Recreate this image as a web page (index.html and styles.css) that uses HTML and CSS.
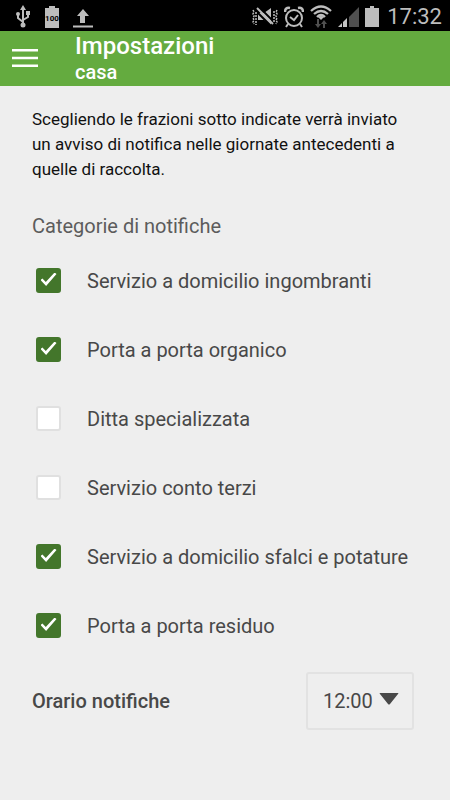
FILE: index.html
```html
<!DOCTYPE html>
<html lang="it">
<head>
<meta charset="utf-8">
<meta name="viewport" content="width=device-width, initial-scale=1">
<title>Impostazioni</title>
<link rel="stylesheet" href="styles.css">
</head>
<body>
<div class="status">
  <div class="status-left">
    <svg width="16" height="24" viewBox="0 0 16 24" fill="none" stroke="#bdbdbd" stroke-width="2"><path d="M7 19V4M7 17L2 13V9M7 15L12 12V8"/><path d="M4 5L7 0L10 5Z" fill="#bdbdbd" stroke="none"/><circle cx="7" cy="20" r="2.500" fill="#bdbdbd" stroke="none"/><circle cx="2" cy="9" r="2" fill="#bdbdbd" stroke="none"/><path d="M10 6h4v4h-4z" fill="#bdbdbd" stroke="none"/></svg>
    <svg width="14" height="24" viewBox="0 0 14 24"><path d="M0 3h4V1h6v2h4v20H0z" fill="#bdbdbd"/><text class="battery-text" x="7" y="16" text-anchor="middle">100</text></svg>
    <svg width="22" height="24" viewBox="0 0 22 24" fill="#bdbdbd"><path d="M11 4L17 11H13V18H8V11H5ZM1 20.500h20v2H1z"/></svg>
  </div>
  <div class="status-right">
    <svg width="26" height="20" viewBox="0 0 26 20" fill="none" stroke="#bdbdbd"><path d="M6 6h6l7-5v17l-7-5H6z" fill="#bdbdbd" stroke="none"/><path d="M7 0L23 16M3 3L19 19" stroke="#000" stroke-width="2"/><path d="M5 1L21 17" stroke-width="2"/><path d="M1 3l1 2-1 2 1 2-1 2 1 2-1 2 1 2M4 5v13M25 3l-1 2 1 2-1 2 1 2-1 2 1 2-1 2M22 4v11" stroke-width="1.500" stroke-dasharray="2 1"/></svg>
    <svg width="20" height="22" viewBox="0 0 20 22" fill="none" stroke="#bdbdbd" stroke-width="2"><circle cx="10" cy="12" r="8"/><path d="M6 11l4 3 4-5M4 18l-2 3M16 18l2 3"/><path d="M1 6Q1 1 6 2M14 2Q19 1 19 6" stroke-width="2.500"/></svg>
    <svg width="22" height="24" viewBox="0 0 22 24" fill="none" stroke="#bdbdbd" stroke-width="2.300"><path d="M1 6Q11-3 21 6M4 9Q11 3 18 9M7 12Q11 8 15 12"/><path d="M8 12Q11 10 14 12L11 15Z" fill="#bdbdbd" stroke="none"/><path d="M7 14v5H5l3 4 3-4H9v-5zM13 23v-4h-2l3-4 3 4h-2v4z" fill="#505050" stroke="none"/></svg>
    <svg width="21" height="22" viewBox="0 0 21 22"><path d="M11 11L21 1v20H11z" fill="#505050"/><path d="M0 21l4-4v4zM5 16l4-4v9H5z" fill="#c4c4c4"/></svg>
    <svg width="14" height="22" viewBox="0 0 14 22" fill="#bdbdbd"><path d="M0 2h5V0h4v2h5v19H0z"/></svg>
    <span class="clock">17:32</span>
  </div>
</div>
<header class="bar">
  <button class="menu" aria-label="Menu"><svg width="26" height="20" viewBox="0 0 26 20" fill="#fff"><path d="M0 0h26v2.600H0zM0 7.700h26v2.600H0zM0 15.400h26v2.600H0z"/></svg></button>
  <div class="titles">
    <h1>Impostazioni</h1>
    <p>casa</p>
  </div>
</header>
<main>
  <p class="intro">Scegliendo le frazioni sotto indicate verrà inviato un avviso di notifica nelle giornate antecedenti a quelle di raccolta.</p>
  <h2>Categorie di notifiche</h2>
  <div class="options">
    <label><input type="checkbox" checked>Servizio a domicilio ingombranti</label>
    <label><input type="checkbox" checked>Porta a porta organico</label>
    <label><input type="checkbox">Ditta specializzata</label>
    <label><input type="checkbox">Servizio conto terzi</label>
    <label><input type="checkbox" checked>Servizio a domicilio sfalci e potature</label>
    <label><input type="checkbox" checked>Porta a porta residuo</label>
  </div>
  <div class="time">
    <label for="time">Orario notifiche</label>
    <div class="picker">
      <select id="time"><option>12:00</option><option>13:00</option></select>
      <svg class="arrow" width="20" height="12" viewBox="0 0 20 12" fill="#484848"><path d="M1 0h18q1 0 0 1L11 11q-1 1-2 0L1 1q-1-1 0-1z"/></svg>
    </div>
  </div>
</main>
</body>
</html>
```
FILE: styles.css
```css
* { box-sizing: border-box; }
body { margin: 0; min-height: 100vh; background: #eee; color: #484848; font-family: Roboto, sans-serif; font-size: 20px; }
h1, h2, p { margin: 0; }
svg { display: block; flex: none; }
.status { display: flex; justify-content: space-between; align-items: center; height: 31px; padding: 3px 8px 0 16px; background: #000; color: #bdbdbd; }
.status-left { display: flex; align-items: center; gap: 13px; }
.status-right { display: flex; align-items: center; gap: 6px; }
.battery-text { font: bold 8px Roboto, sans-serif; fill: #000; }
.clock { padding-left: 2px; font-size: 22px; line-height: 28px; }
.bar { display: flex; align-items: center; gap: 37px; padding: 1px 12px 0; background: #64ab3f; color: #fff; }
.menu { padding: 0; border: 0; background: none; }
.titles { padding-bottom: 1px; }
.titles h1 { font-size: 24px; font-weight: 500; line-height: 28px; }
.titles p { font-size: 20px; font-weight: 500; line-height: 25px; }
main { padding: 21px 32px; }
.intro { color: #111; font-size: 17px; line-height: 25px; }
h2 { margin-top: 32px; font-size: 20px; font-weight: 400; line-height: 24px; color: #5c5c5c; }
.options { display: flex; flex-direction: column; margin-top: 8px; }
.options label { display: flex; align-items: center; gap: 26px; min-height: 69px; padding-left: 4px; white-space: nowrap; }
.options input { appearance: none; flex: none; display: grid; place-items: center; width: 25px; height: 25px; margin: 0; border: 2px solid #e0e0e0; border-radius: 3px; background: #fff; }
.options input:checked { padding-bottom: 2px; border-color: #43762b; background: #43762b; }
.options input:checked::before { content: ""; width: 16px; height: 14px; background: #fff; clip-path: polygon(0 54%, 12% 43%, 33% 67%, 88% 0, 100% 11%, 35% 96%); }
.time { display: flex; align-items: center; justify-content: space-between; margin-top: 12px; padding-right: 4px; }
.time label { font-weight: 500; }
.picker { position: relative; }
.picker select { appearance: none; display: block; width: 108px; height: 58px; padding: 0 15px; border: 2px solid #e2e2e2; border-radius: 3px; background: transparent; color: inherit; font: inherit; }
.arrow { position: absolute; top: 21px; right: 15px; pointer-events: none; }
```
